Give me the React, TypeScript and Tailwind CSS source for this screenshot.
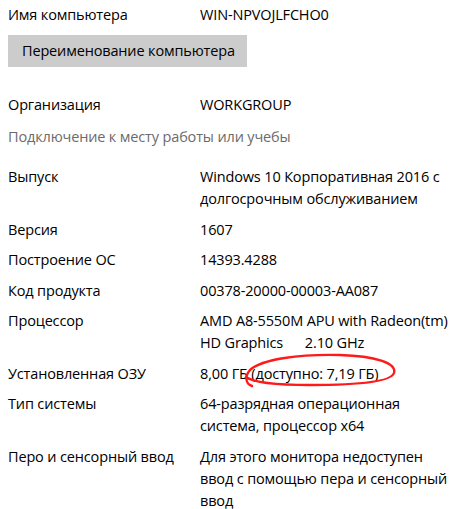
import React from "react";

type Row = { label: string; value: React.ReactNode };

const ROWS: Row[] = [
  { label: "Выпуск", value: "Windows 10 Корпоративная 2016 с долгосрочным обслуживанием" },
  { label: "Версия", value: "1607" },
  { label: "Построение ОС", value: "14393.4288" },
  { label: "Код продукта", value: "00378-20000-00003-AA087" },
  {
    label: "Процессор",
    value: (
      <>
        <span className="whitespace-nowrap">AMD A8-5550M APU with Radeon(tm)</span>
        <br />
        HD Graphics&nbsp;&nbsp;&nbsp;&nbsp;&nbsp; 2.10 GHz
      </>
    ),
  },
  {
    label: "Установленная ОЗУ",
    value: (
      <span className="relative">
        8,00 ГБ (доступно: 7,19 ГБ)
        <svg
          className="pointer-events-none absolute left-[40px] top-[-12px]"
          width="160"
          height="38"
          viewBox="0 0 160 38"
          fill="none"
        >
          <path
            d="M12 34 C6 32 4 25 10 18 C22 7 60 2 100 3 C135 4 157 11 154 21 C151 31 110 33 70 33 C40 33 14 31 6 25"
            stroke="#ff1a1a"
            strokeWidth="2.4"
            strokeLinecap="round"
          />
        </svg>
      </span>
    ),
  },
  { label: "Тип системы", value: "64-разрядная операционная система, процессор x64" },
  {
    label: "Перо и сенсорный ввод",
    value: "Для этого монитора недоступен ввод с помощью пера и сенсорный ввод",
  },
];

export default function App() {
  return (
    <div className="h-[509px] w-[457px] overflow-hidden bg-white pl-2 font-['Open_Sans','Noto_Sans',sans-serif] text-[14.5px] leading-[22px] tracking-[-0.15px] text-black">
      <div className="flex pt-1">
        <div className="w-[192px]">Имя компьютера</div>
        <div>WIN-NPVOJLFCHO0</div>
      </div>
      <button className="mt-[9px] block h-8 w-[239px] whitespace-nowrap bg-[#cccccc] px-[14px] text-left">
        Переименование компьютера
      </button>
      <div className="mt-[27px] flex">
        <div className="w-[192px]">Организация</div>
        <div>WORKGROUP</div>
      </div>
      <div className="mt-[10px] text-[#6b6b6b]">Подключение к месту работы или учебы</div>
      <div className="mt-[18px] flex flex-col gap-[8.5px]">
        {ROWS.map((r) => (
          <div key={r.label} className="flex">
            <div className="w-[192px] shrink-0">{r.label}</div>
            <div className="w-[250px]">{r.value}</div>
          </div>
        ))}
      </div>
    </div>
  );
}
